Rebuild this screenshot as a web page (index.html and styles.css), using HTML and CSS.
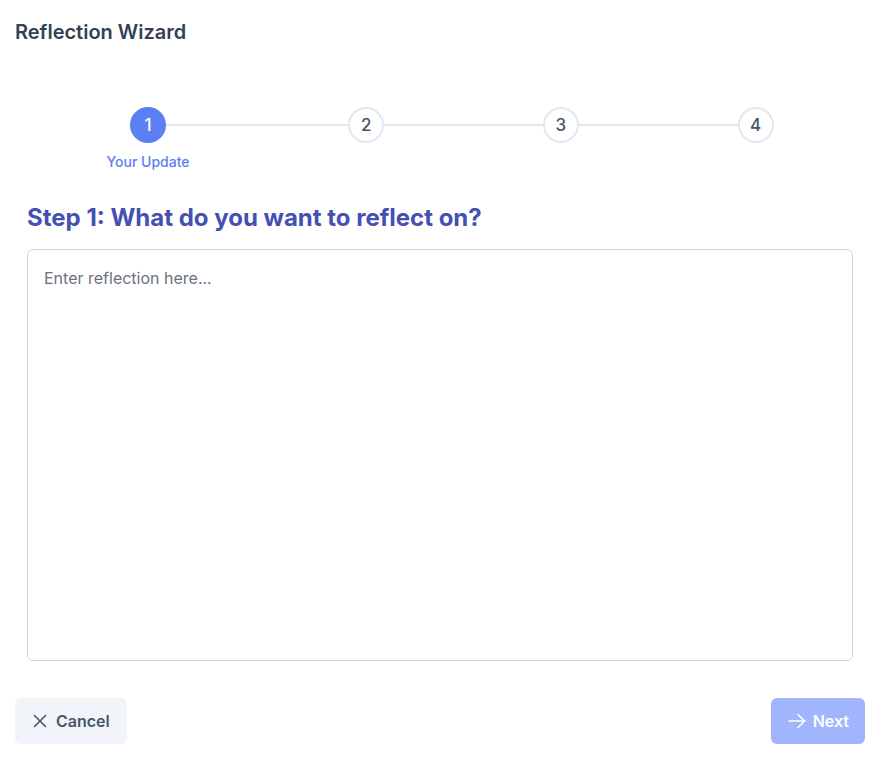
FILE: index.html
```html
<!DOCTYPE html>
<html>
<head>
<meta charset="utf-8">
<link rel="stylesheet" href="styles.css">
</head>
<body>
<div class="page">
  <h1 class="title">Reflection Wizard</h1>
  <div class="stepper">
    <div class="step active">
      <div class="circle">1</div>
      <div class="label">Your Update</div>
    </div>
    <div class="connector first"></div>
    <div class="step"><div class="circle">2</div></div>
    <div class="connector"></div>
    <div class="step"><div class="circle">3</div></div>
    <div class="connector"></div>
    <div class="step"><div class="circle">4</div></div>
  </div>
  <div class="content">
    <h2 class="heading">Step 1: What do you want to reflect on?</h2>
    <textarea class="input" placeholder="Enter reflection here..."></textarea>
  </div>
  <div class="actions">
    <button class="btn cancel">
      <svg width="16" height="16" viewBox="0 0 16 16" fill="none" stroke="currentColor" stroke-width="1.6" stroke-linecap="round"><path d="M2.5 2.5l11 11M13.5 2.5l-11 11"/></svg>
      Cancel
    </button>
    <button class="btn next" disabled>
      <svg width="18" height="16" viewBox="0 0 18 16" fill="none" stroke="currentColor" stroke-width="1.6" stroke-linecap="round" stroke-linejoin="round"><path d="M1 8h16M10 1.5L16.5 8 10 14.5"/></svg>
      Next
    </button>
  </div>
</div>
</body>
</html>
```
FILE: styles.css
```css
* { box-sizing: border-box; }
html, body { margin: 0; padding: 0; background: #fff; }
body { font-family: Inter, "Noto Sans", sans-serif; color: #334155; }
.page { width: 850px; margin-left: 15px; padding-top: 18px; }
.title { margin: 0; font-size: 20px; font-weight: 600; line-height: 28px; color: #334155; }
.stepper { display: flex; align-items: flex-start; width: 667px; margin: 61px auto 0; }
.step { display: flex; flex-direction: column; align-items: center; position: relative; z-index: 1; }
.circle { width: 36px; height: 36px; border-radius: 50%; border: 2px solid #e2e8f0; background: #fff; display: flex; align-items: center; justify-content: center; font-size: 17px; font-weight: 500; color: #475569; }
.step.active .circle { background: #5b7ff5; border-color: #5b7ff5; color: #fff; }
.label { margin-top: 10px; font-size: 14px; font-weight: 500; color: #5b7ff5; line-height: 18px; white-space: nowrap; }
.connector { flex: 1; height: 2px; background: #e2e8f0; margin-top: 17px; position: relative; }
.connector.first::before { content: ""; position: absolute; right: 100%; top: 0; width: 24px; height: 2px; background: #e2e8f0; }
.content { padding: 0 12px; margin-top: 31px; }
.heading { margin: 0; font-size: 24px; font-weight: 700; line-height: 32px; color: #4450b2; }
.input { display: block; width: 100%; height: 412px; margin-top: 15px; border: 1px solid #d1d5db; border-radius: 6px; padding: 16px; font-family: inherit; font-size: 16px; line-height: 24px; resize: none; color: #334155; }
.input::placeholder { color: #6b7280; }
.actions { display: flex; justify-content: space-between; margin-top: 37px; }
.btn { display: flex; align-items: center; gap: 8px; height: 46px; border: none; border-radius: 6px; font-family: inherit; font-size: 16px; font-weight: 600; padding: 0 17px; }
.cancel { background: #f1f5f9; color: #475569; }
.next { background: #a0b5fb; color: #fff; gap: 7px; padding: 0 16px 0 17px; }
```
